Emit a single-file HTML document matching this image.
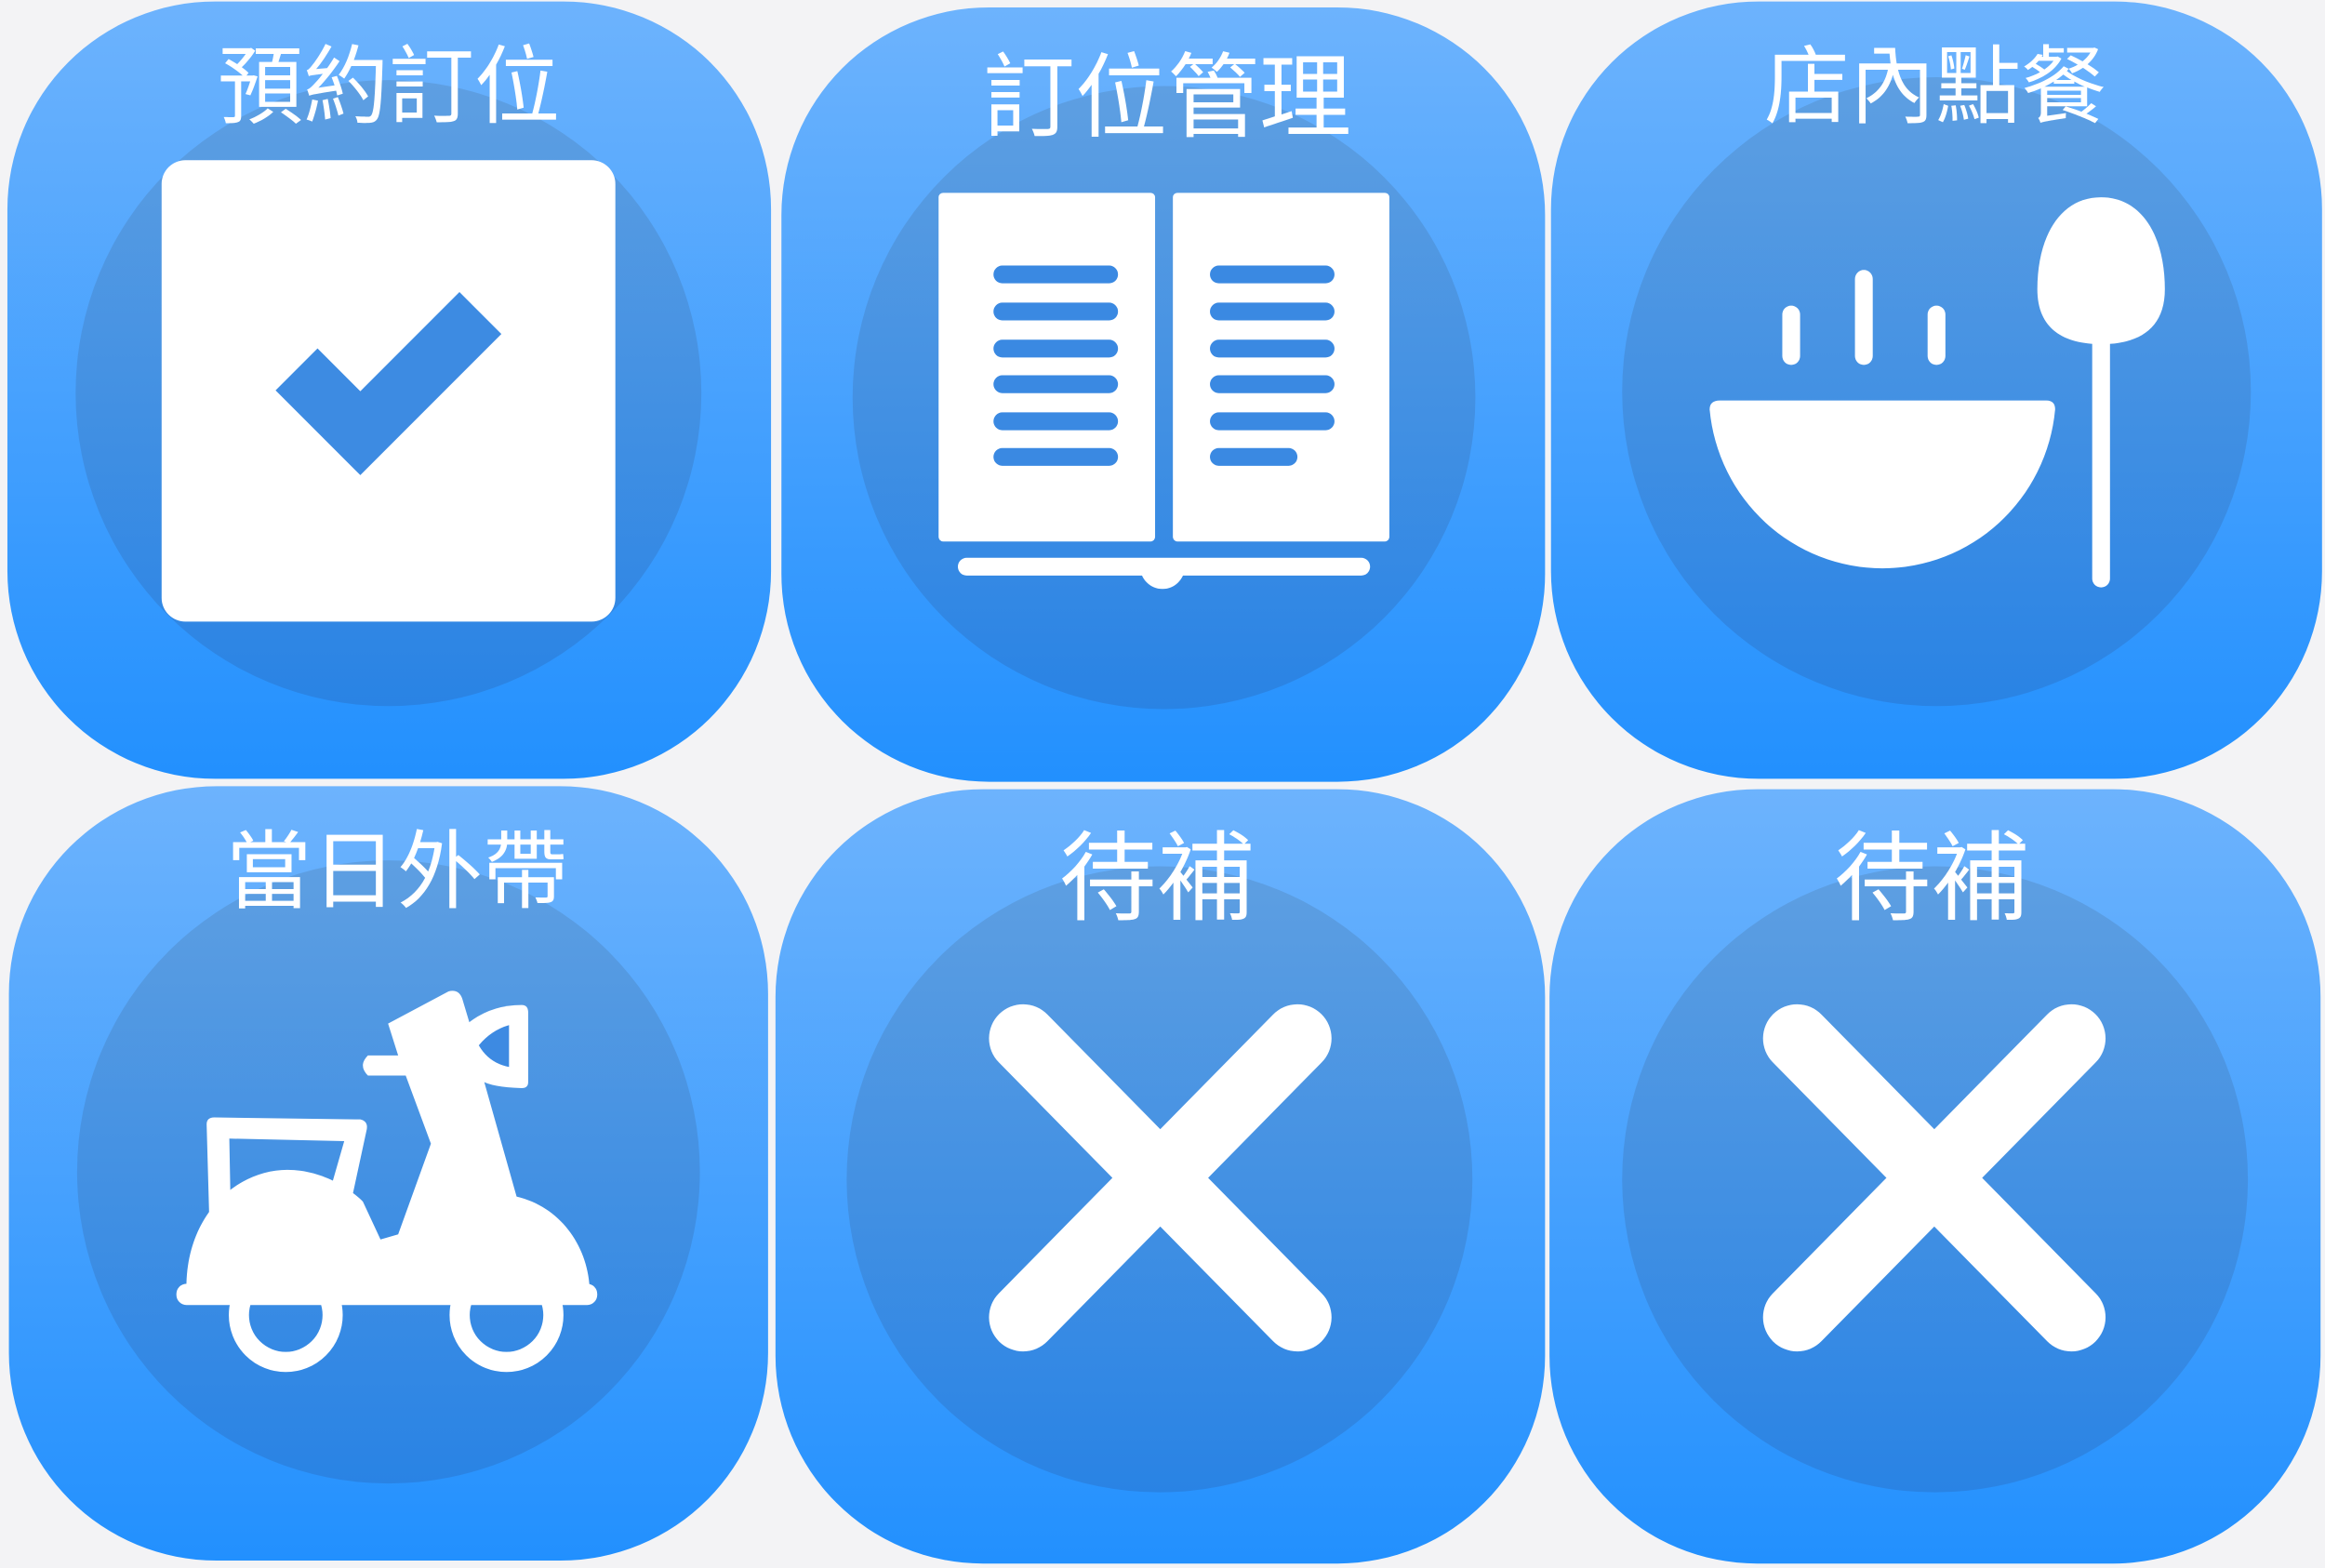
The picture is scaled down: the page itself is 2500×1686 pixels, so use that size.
<!DOCTYPE html>
<html><head><meta charset="utf-8">
<style>
html,body{margin:0;padding:0;background:#f3f3f5;}
body{position:relative;width:2500px;height:1686px;overflow:hidden;}
svg{display:block;position:absolute;left:0;top:0;}
.t{position:absolute;width:800px;margin-left:-400px;text-align:center;color:#fff;line-height:1;white-space:nowrap;
font-family:"Noto Sans CJK TC","Noto Sans CJK SC","Liberation Sans",sans-serif;font-weight:400;}
</style></head>
<body>
<svg width="2500" height="1686" viewBox="0 0 1568 1057" preserveAspectRatio="none" xmlns="http://www.w3.org/2000/svg">
<defs>
<linearGradient id="tg" x1="0" y1="0" x2="0" y2="1">
<stop offset="0" stop-color="#6db3fd"/><stop offset="1" stop-color="#2290fe"/>
</linearGradient>
<linearGradient id="cg" x1="0" y1="0" x2="0" y2="1">
<stop offset="0" stop-color="#5e9fe2"/><stop offset="1" stop-color="#2983e4"/>
</linearGradient>
</defs>
<rect width="1568" height="1057" fill="#f3f3f5"/>

<rect x="5" y="1" width="515" height="524" rx="140" fill="url(#tg)"/>
<rect x="527" y="5" width="515" height="522" rx="140" fill="url(#tg)"/>
<rect x="1046" y="1" width="520" height="524" rx="140" fill="url(#tg)"/>
<rect x="6" y="530" width="512" height="522" rx="140" fill="url(#tg)"/>
<rect x="523" y="532" width="519" height="522" rx="140" fill="url(#tg)"/>
<rect x="1045" y="532" width="520" height="522" rx="140" fill="url(#tg)"/>

<circle cx="262" cy="265" r="211" fill="url(#cg)"/>
<circle cx="785" cy="268" r="210" fill="url(#cg)"/>
<circle cx="1306" cy="264" r="212" fill="url(#cg)"/>
<circle cx="262" cy="790" r="210" fill="url(#cg)"/>
<circle cx="782" cy="795" r="211" fill="url(#cg)"/>
<circle cx="1305" cy="795" r="211" fill="url(#cg)"/>

<rect x="109" y="108" width="306" height="311" rx="16" fill="#fff"/>
<path d="M200,249 L243,292 L324,211" fill="none" stroke="#3d8be2" stroke-width="40" stroke-linecap="butt" stroke-linejoin="miter"/>

<rect x="633" y="130" width="146" height="235" rx="3" fill="#fff"/>
<rect x="791" y="130" width="146" height="235" rx="3" fill="#fff"/>
<g stroke="#3a89e2" stroke-width="12" stroke-linecap="round">
<path d="M676,185H748M676,210H748M676,235H748M676,259H748M676,284H748M676,308H748"/>
<path d="M822,185H894M822,210H894M822,235H894M822,259H894M822,284H894M822,308H869"/>
</g>
<path d="M652,382H918" stroke="#fff" stroke-width="12" stroke-linecap="round"/>
<path d="M774,382 A10,10 0 0 0 794,382" fill="none" stroke="#fff" stroke-width="10"/>

<path d="M1153,276 Q1153,270 1160,270 L1380,270 Q1386,270 1386,276 A117,118 0 0 1 1153,276 Z" fill="#fff"/>
<g stroke="#fff" stroke-width="12" stroke-linecap="round">
<path d="M1208,212V240M1257,188V240M1306,212V240"/>
<path d="M1417,220V390"/>
</g>
<path d="M1417,133 C1445,133 1460,160 1460,195 C1460,222 1442,232 1417,232 C1392,232 1374,222 1374,195 C1374,160 1389,133 1417,133 Z" fill="#fff"/>

<g transform="translate(0,533) scale(0.3399)">
<rect x="350" y="978" width="835" height="42" rx="20" fill="#fff"/>
<path d="M370,985 C370,840 470,752 570,752 C640,752 695,790 720,815 L755,890 L790,880 L855,700 L805,565 L730,565 Q710,545 730,525 L790,525 L770,462 L890,398 Q910,393 917,412 L932,462 L960,575 L1025,805 C1110,825 1165,900 1170,985 Z" fill="#fff"/>
<path d="M930,460 Q975,425 1035,425 Q1048,425 1048,440 L1048,578 Q1048,590 1035,590 Q975,588 955,575 Z" fill="#fff"/>
<path d="M950,505 Q975,475 1010,465 L1010,548 Q970,540 950,505 Z" fill="#3d8ae2"/>
<path d="M410,662 Q410,648 425,648 L715,652 Q732,656 727,675 L700,800 L660,775 L683,695 L455,690 L457,795 L415,840 Z" fill="#fff"/>
<circle cx="567" cy="1040" r="93" fill="none" stroke="#fff" stroke-width="40"/>
<circle cx="1005" cy="1040" r="93" fill="none" stroke="#fff" stroke-width="40"/>
<rect x="370" y="985" width="800" height="33" fill="#fff"/>
</g>

<g stroke="#fff" stroke-width="46" stroke-linecap="round">
<path d="M690,700 L875,888 M875,700 L690,888"/>
<path d="M1212,700 L1397,888 M1397,700 L1212,888"/>
</g>
</svg>

<div class="t" style="left:418px;top:40px;font-size:92px;">預約訂位</div>
<div class="t" style="left:1255px;top:47px;font-size:99px;">訂位管理</div>
<div class="t" style="left:2081px;top:40px;font-size:92px;">店內點餐</div>
<div class="t" style="left:427px;top:884px;font-size:92px;">當日外帶</div>
<div class="t" style="left:1244px;top:884px;font-size:105px;">待補</div>
<div class="t" style="left:2077px;top:884px;font-size:105px;">待補</div>
</body></html>
